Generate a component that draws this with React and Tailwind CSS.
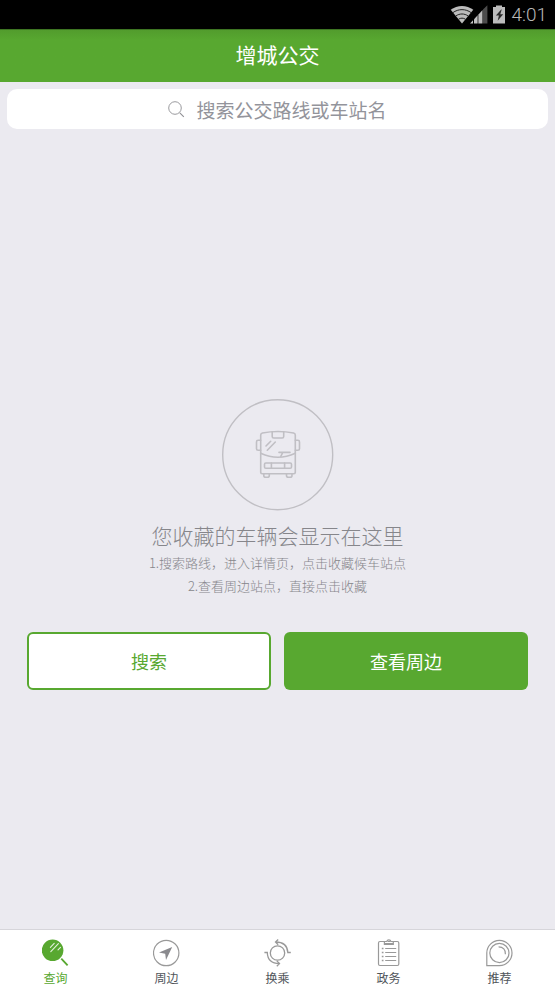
import React from 'react';

const StatusBar = () => (
  <div className="flex h-[29px] items-center justify-end bg-black pr-2 text-[#b8b8b8]">
    {/* Wifi */}
    <svg className="h-[19px] w-6" viewBox="0 0 24 19" fill="none" aria-hidden="true">
      <path d="M12 18.5 0.7 4.8C7.3-.3 16.7-.3 23.3 4.8Z" fill="#bcbcbc" />
      <path
        d="M2.8 7.7c5.6-4.1 12.8-4.1 18.4 0M5.8 11c3.9-2.7 8.5-2.7 12.4 0M8.6 14.2c2.2-1.4 4.6-1.4 6.8 0"
        stroke="#222"
        strokeWidth="1"
      />
    </svg>
    {/* Signal */}
    <svg className="-ml-1 h-[19px] w-[18px]" viewBox="0 0 18 19" aria-hidden="true">
      <path d="M0 18.5 3 15.2v3.3Z" fill="#c4c4c4" />
      <path d="M4 18.5v-4.3l3-3.2v7.5Z" fill="#c0c0c0" />
      <path d="M7 18.5V11l1.5-1.5v9Z" fill="#777" />
      <path d="M8.5 18.5v-9L12.5 5v13.500Z" fill="#bcbcbc" />
      <path d="M13 18.5V4.6L17.4.3v18.2Z" fill="#4c4c4c" />
    </svg>
    {/* Battery */}
    <svg className="ml-1 h-[19px] w-[14px]" viewBox="0 0 14 19" aria-hidden="true">
      <path d="M4 .5h6v1.500h3v16.500H1V2h3Z" fill="#bcbcbc" />
      <path d="M9.2 4.500 3.900 10.500h3l-1.200 5.200 5.500-6.400H8.300l1.400-4.800Z" fill="#2a2a2a" />
    </svg>
    <span className="ml-[5px] font-[Roboto,sans-serif] text-[19px] leading-6 font-light">4:01</span>
  </div>
);

const BusIcon = () => (
  <svg
    className="h-28 w-28"
    viewBox="0 0 112 112"
    fill="none"
    stroke="#c0bfc4"
    strokeWidth="1.6"
    strokeLinejoin="round"
    strokeLinecap="round"
    aria-hidden="true"
  >
    <circle cx="55.7" cy="55.7" r="55" strokeWidth="1.4" />
    <path d="M38.7 73.2V36q0-1.7 1.7-2Q56 31 71.6 34q1.7.3 1.7 2v37.2q0 1.5-1.5 1.5H40.2q-1.5 0-1.5-1.5Z" />
    <path d="M38.7 41.3h-2.6q-1.6 0-1.6 1.6v6.8q0 1.6 1.6 1.6h2.6M73.3 41.3h2.6q1.6 0 1.6 1.6v6.8q0 1.6-1.6 1.6h-2.6" />
    <path d="M38.7 54.3q17.3 8 34.6 0" />
    <path d="M50.2 32.8v4.7q0 1.5 1.5 1.5h8.5q1.5 0 1.5-1.5v-4.7" />
    <path d="m44 47 4.7-4.7M45.3 51.2l8-8.2M57 53.4h11M60.8 53.4l-2 4" />
    <rect x="42.5" y="64" width="27" height="5.3" rx="1.3" />
    <path d="M49.4 64v5.3M62.6 64v5.3" />
    <path d="M41.8 75v1.4q0 1.9 1.9 1.9h1.7q1.9 0 1.9-1.9V75M64.5 75v1.4q0 1.9 1.9 1.9h1.7q1.9 0 1.9-1.9V75" />
  </svg>
);

const QueryIcon = () => (
  <svg className="h-7 w-7" viewBox="0 0 28 28" fill="none" aria-hidden="true">
    <circle cx="10.6" cy="11.3" r="10.8" fill="#58a830" />
    <path d="m19.3 19.7 6.3 6.6" stroke="#58a830" strokeWidth="1.8" />
    <path
      d="m8.4 8.3 3.8-4M8.8 12.7l7.6-8M16 10.9l2.5-2.6"
      stroke="#e3f1dc"
      strokeWidth="1.1"
      strokeLinecap="round"
    />
  </svg>
);

const NearbyIcon = () => (
  <svg className="h-7 w-7" viewBox="0 0 28 28" fill="none" aria-hidden="true">
    <circle cx="13.2" cy="14" r="12.7" stroke="#999" strokeWidth="1.2" />
    <path d="M19.2 8 6 13.6l6.2 1.2.8 6.2Z" fill="#8a8a8e" />
  </svg>
);

const TransferIcon = () => (
  <svg className="h-7 w-7" viewBox="0 0 28 28" fill="none" stroke="#999" strokeWidth="1.3" aria-hidden="true">
    <circle cx="13.5" cy="14" r="7.2" />
    <path d="M26.8 13.5h-3C23.5 7.2 19.3 3 11.5 3M14.2.5 11.5 3l2.7 2.7" />
    <path d="M.4 13.5h2.9c.2 6.8 4.2 11.1 12.2 11.1M12.8 21.9l2.7 2.7-2.7 2.6" />
  </svg>
);

const AffairsIcon = () => (
  <svg className="h-7 w-7" viewBox="0 0 28 28" fill="none" stroke="#999" strokeWidth="1.2" aria-hidden="true">
    <rect x="3.5" y="2.5" width="20.3" height="24" rx="1.5" />
    <path d="M9.4 2.5v2.9h8.9V2.5h-2.4a2.1 2.1 0 0 0-4.1 0Z" fill="#fff" />
    <path d="M10 4.5h8.2M12.7 2.5h2.4" />
    <path d="M10.2 9.5h11M10.2 13.5h11M10.2 17.5h11M10.2 21.5h11" />
    <path d="M6.8 9.5h1.7M6.8 13.5h1.7M6.8 17.5h1.7M6.8 21.5h1.7" strokeWidth="1.6" />
  </svg>
);

const RecommendIcon = () => (
  <svg className="h-7 w-7" viewBox="0 0 28 28" fill="none" stroke="#999" strokeWidth="1.2" aria-hidden="true">
    <path d="M.8 26.6V14A12.6 12.6 0 1 1 13.4 26.6Z" />
    <circle cx="13.4" cy="14" r="9.6" />
    <path d="M12.6 7.8c4.5 0 7.2 2.9 6.8 7.4" />
  </svg>
);

const tabs = [
  { key: 'query', label: '查询', Icon: QueryIcon },
  { key: 'nearby', label: '周边', Icon: NearbyIcon },
  { key: 'transfer', label: '换乘', Icon: TransferIcon },
  { key: 'affairs', label: '政务', Icon: AffairsIcon },
  { key: 'recommend', label: '推荐', Icon: RecommendIcon },
];

const App = () => {
  return (
    <div className="flex min-h-screen flex-col bg-[#ebeaf0] font-['Noto_Sans_CJK_SC',sans-serif]">
      <StatusBar />

      {/* Title */}
      <header className="flex h-[53px] justify-center border-t border-[#3d7522] bg-linear-to-b from-[#529c2d] to-[#58a830] to-20% pt-2 text-white">
        <h1 className="text-[21px] leading-8 font-normal">增城公交</h1>
      </header>

      {/* Search */}
      <div className="px-[7px] pt-[7px]">
        <label className="flex h-10 items-center justify-center gap-[11px] rounded-[10px] bg-white">
          <svg className="h-[17px] w-[17px]" viewBox="0 0 17 17" fill="none" stroke="#8e8e93" aria-hidden="true">
            <circle cx="7" cy="7" r="6.3" strokeWidth=".9" />
            <path d="m11.8 11.8 4 4" strokeWidth="1.1" />
          </svg>
          <input
            type="text"
            aria-label="搜索公交路线或车站名"
            placeholder="搜索公交路线或车站名"
            className="field-sizing-content bg-transparent pt-px text-[19px] leading-7 text-gray-700 outline-none placeholder:text-[#93949b]"
          />
        </label>
      </div>

      {/* Empty favourites */}
      <main className="flex flex-1 flex-col items-center justify-center px-[27px] pt-[31px]">
        <BusIcon />
        <h2 className="mt-2 text-[21px] leading-8 font-light text-[#86868b]">您收藏的车辆会显示在这里</h2>
        <div className="text-center text-[13px] leading-[23px] font-light text-[#86868b]">
          <p>1.搜索路线，进入详情页，点击收藏候车站点</p>
          <p>2.查看周边站点，直接点击收藏</p>
        </div>
        <div className="mt-[35px] grid w-full grid-cols-2 gap-[13px] text-lg">
          <button className="h-[58px] rounded-md border-2 border-[#58a830] bg-white text-[#58a830]">
            搜索
          </button>
          <button className="h-[58px] rounded-md bg-[#58a830] text-white">查看周边</button>
        </div>
      </main>

      {/* Tabs */}
      <nav className="grid h-[59px] grid-cols-5 border-t border-[#d6d5da] bg-white">
        {tabs.map(({ key, label, Icon }) => (
          <a
            key={key}
            href={`#${key}`}
            className={`flex flex-col items-center pt-[9px] text-xs leading-[22px] ${
              key === 'query' ? 'text-[#58a830]' : 'text-[#50555a]'
            }`}
          >
            <Icon />
            <span className="leading-[21px]">{label}</span>
          </a>
        ))}
      </nav>
    </div>
  );
};

export default App;
